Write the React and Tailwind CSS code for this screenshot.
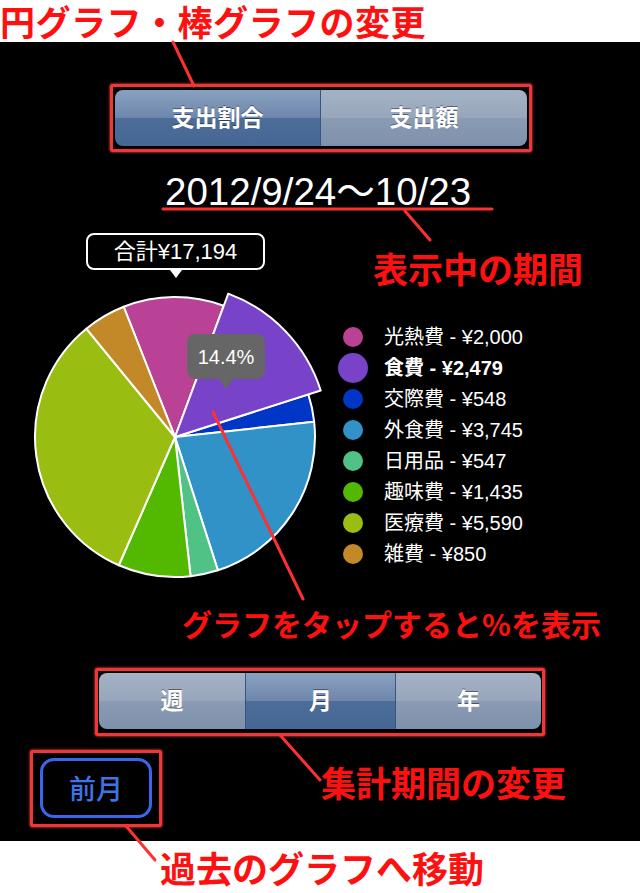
import React from "react";

const items = [
  { name: "光熱費", value: 2000, color: "#b94296" },
  { name: "食費", value: 2479, color: "#7843c8", selected: true },
  { name: "交際費", value: 548, color: "#0036c5" },
  { name: "外食費", value: 3745, color: "#3092c6" },
  { name: "日用品", value: 547, color: "#50c286" },
  { name: "趣味費", value: 1435, color: "#52b900" },
  { name: "医療費", value: 5590, color: "#9abd12" },
  { name: "雑費", value: 850, color: "#c38828" }
];

const yen = (n) => "¥" + n.toLocaleString("en-US");

function PieChart() {
  const cx = 175;
  const cy = 149;
  const total = items.reduce((s, i) => s + i.value, 0);
  let angle = -21.5;
  const slices = items.map((item) => {
    const sweep = (item.value / total) * 360;
    const a0 = angle;
    const a1 = angle + sweep;
    angle = a1;
    const r = item.selected ? 153 : 140;
    const rad = (d) => (d * Math.PI) / 180;
    const x1 = cx + r * Math.sin(rad(a0));
    const y1 = cy - r * Math.cos(rad(a0));
    const x2 = cx + r * Math.sin(rad(a1));
    const y2 = cy - r * Math.cos(rad(a1));
    const large = sweep > 180 ? 1 : 0;
    return {
      ...item,
      d: `M ${cx} ${cy} L ${x1} ${y1} A ${r} ${r} 0 ${large} 1 ${x2} ${y2} Z`
    };
  });
  const ordered = [...slices.filter((s) => !s.selected), ...slices.filter((s) => s.selected)];

  return (
    <svg width="333" height="300" viewBox="0 0 333 300">
      {ordered.map((s) => (
        <path key={s.name} d={s.d} fill={s.color} stroke="#fff" strokeWidth="2" strokeLinejoin="round" />
      ))}
    </svg>
  );
}

function Segmented({ labels, active, widths }) {
  return (
    <div className="flex h-[56px] rounded-[8px] overflow-hidden shadow-[0_1px_1px_rgba(0,0,0,0.8)]">
      {labels.map((label, i) => (
        <div
          key={label}
          className={
            "flex items-center justify-center text-white text-[23px] font-bold [text-shadow:0_-1px_0_rgba(0,0,0,0.45)] " +
            (i > 0 ? "border-l border-[#38557f] " : "") +
            (i === active
              ? "bg-[linear-gradient(180deg,#8aa1c0_0%,#6d87ac_50%,#4d6d99_50%,#466794_100%)]"
              : "bg-[linear-gradient(180deg,#a5b2c5_0%,#97a6bb_50%,#8a9bb3_50%,#7e91ac_100%)]")
          }
          style={{ width: widths[i] }}
        >
          {label}
        </div>
      ))}
    </div>
  );
}

function RedBox({ children, className }) {
  return (
    <div className={"border-[3px] border-[#f23535] rounded-[2px] shadow-[0_0_3px_#ff5a5a] " + className}>
      {children}
    </div>
  );
}

export default function App() {
  return (
    <div className="relative w-[640px] h-[893px] bg-white overflow-hidden font-['Liberation_Sans','Noto_Sans_CJK_JP',sans-serif]">
      {/* header label */}
      <div className="h-[42px] flex items-center">
        <span className="text-[35px] leading-[42px] font-bold text-[#ff1010] font-['Noto_Sans_CJK_JP',sans-serif] tracking-[0.5px]">
          円グラフ・棒グラフの変更
        </span>
      </div>

      {/* app screen */}
      <div className="bg-black h-[799px] flex flex-col">
        <RedBox className="mt-[42px] ml-[110px] w-[422px] h-[68px] px-[2px] pt-[3px]">
          <Segmented labels={["支出割合", "支出額"]} active={0} widths={[205, 207]} />
        </RedBox>

        <div className="mt-[20px] h-[40px] pl-[165px] text-white text-[38.5px] leading-[40px]">
          2012/9/24〜10/23
        </div>

        <div className="flex h-[76px] items-start">
          <div className="ml-[86px] mt-[21px] flex flex-col items-center">
            <div className="w-[179px] h-[37px] border-2 border-white rounded-[8px] bg-black flex items-center justify-center text-white text-[22px]">
              合計{yen(17194)}
            </div>
            <div className="w-0 h-0 border-l-[6px] border-r-[6px] border-t-[8px] border-l-transparent border-r-transparent border-t-white" />
          </div>
          <div className="ml-auto mr-[57px] mt-[38px] text-[35px] leading-none font-bold text-[#ff1010] font-['Noto_Sans_CJK_JP',sans-serif]">
            表示中の期間
          </div>
        </div>

        <div className="relative flex h-[300px]">
          <PieChart />
          <div className="absolute left-[187px] top-[46px] flex flex-col items-center">
            <div className="w-[78px] h-[45px] rounded-[8px] bg-[#666666] flex items-center justify-center text-white text-[20px]">
              14.4%
            </div>
            <div className="w-0 h-0 border-l-[7px] border-r-[7px] border-t-[10px] border-l-transparent border-r-transparent border-t-[#666666]" />
          </div>
          <div className="pt-[33px] flex flex-col">
            {items.map((item) => (
              <div key={item.name} className="h-[31px] flex items-center">
                <div className="w-[40px] flex justify-center">
                  <div
                    className={item.selected ? "w-[30px] h-[30px] rounded-full" : "w-[20px] h-[20px] rounded-full"}
                    style={{ background: item.color }}
                  />
                </div>
                <span className={"ml-[11px] text-white text-[20px] whitespace-nowrap " + (item.selected ? "font-bold" : "")}>
                  {item.name} - {yen(item.value)}
                </span>
              </div>
            ))}
          </div>
        </div>

        <div className="mt-[20px] ml-[182px] text-[30px] leading-none font-bold text-[#ff1010] font-['Noto_Sans_CJK_JP',sans-serif]">
          グラフをタップすると%を表示
        </div>

        <RedBox className="mt-[30px] ml-[95px] w-[450px] h-[68px] px-[1px] pt-[2px]">
          <Segmented labels={["週", "月", "年"]} active={1} widths={[146, 150, 146]} />
        </RedBox>

        <div className="flex items-start">
          <RedBox className="mt-[14px] ml-[30px] w-[132px] h-[77px] pl-[7px] pt-[5px]">
            <div className="w-[112px] h-[60px] border-[3px] border-[#3a66ee] rounded-[14px] flex items-center justify-center text-[#3f73e6] text-[27px] font-medium font-['Noto_Sans_CJK_JP',sans-serif]">
              前月
            </div>
          </RedBox>
          <div className="mt-[28px] ml-[159px] text-[35px] leading-none font-bold text-[#ff1010] font-['Noto_Sans_CJK_JP',sans-serif]">
            集計期間の変更
          </div>
        </div>
      </div>

      {/* footer label */}
      <div className="pt-[8px] pl-[160px]">
        <span className="text-[36px] leading-none font-bold text-[#ff1010] font-['Noto_Sans_CJK_JP',sans-serif]">
          過去のグラフへ移動
        </span>
      </div>

      {/* annotation connectors */}
      <svg className="absolute inset-0 pointer-events-none" width="640" height="893">
        <g stroke="#ff3030" strokeWidth="3" strokeLinecap="round">
          <line x1="173" y1="42" x2="194" y2="86" />
          <line x1="163" y1="209" x2="492" y2="209" />
          <line x1="405" y1="211" x2="430" y2="240" />
          <line x1="213" y1="412" x2="303" y2="599" />
          <line x1="280" y1="735" x2="320" y2="780" />
          <line x1="126" y1="826" x2="155" y2="860" />
        </g>
      </svg>
    </div>
  );
}
